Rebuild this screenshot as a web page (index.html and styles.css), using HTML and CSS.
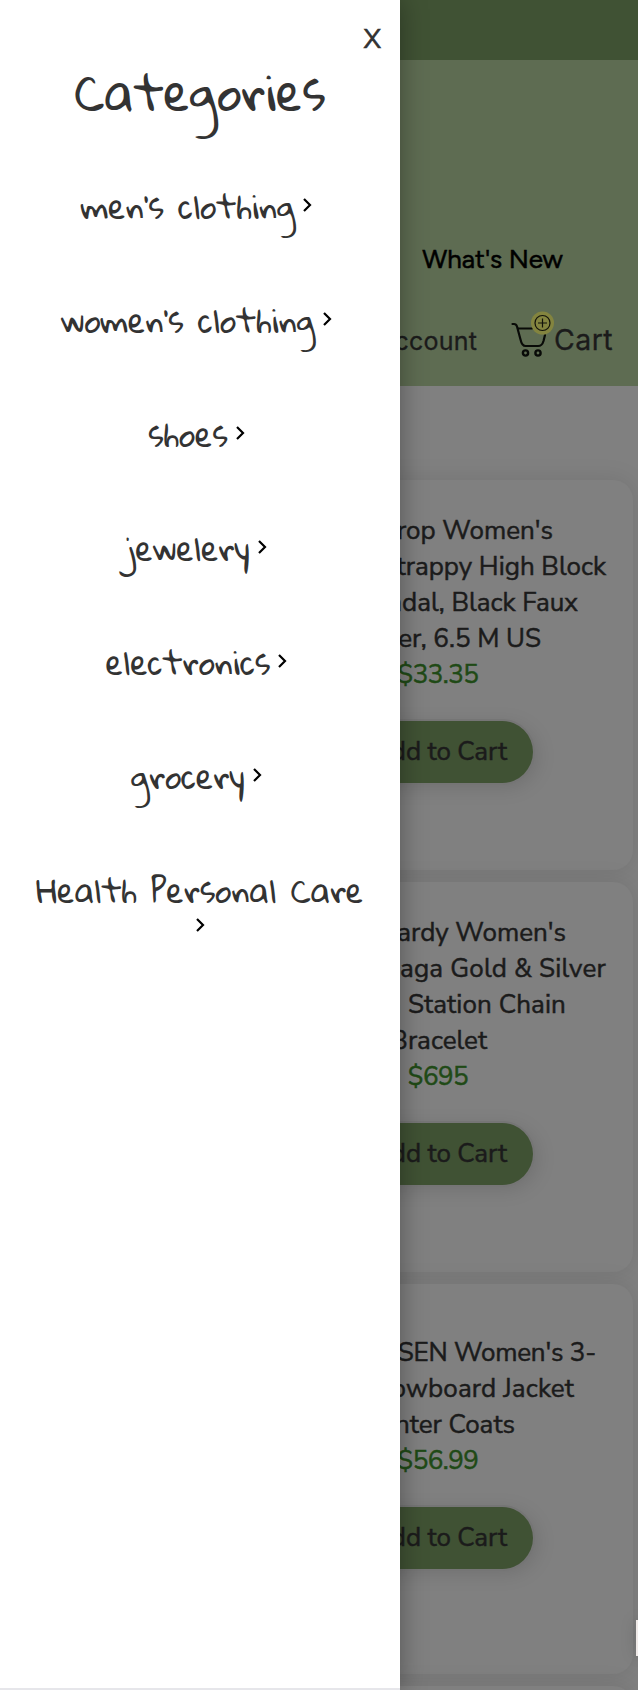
FILE: index.html
```
<!DOCTYPE html>
<html lang="en">
<head>
<meta charset="utf-8">
<title>Shop</title>
<link rel="stylesheet" href="styles.css">
</head>
<body>
<div class="page">
  <div class="topbar"></div>
  <header class="header">
    <nav class="links"><a class="whats-new">What's New</a></nav>
    <div class="tools">
      <span class="account">Account</span>
      <span class="cart">
        <svg class="cart-icon" width="43" height="50" viewBox="0 0 43 50" fill="none">
          <path d="M1.500 15H3C4.800 15 5.500 16 6 17.500L9.500 30.500C10.500 35 11.500 37 14.500 37H27C30.500 37 31.500 35.500 32.500 32L34 26M7.500 19.500H21" stroke="#080a07" stroke-width="2.200" stroke-linecap="round" stroke-linejoin="round"/>
          <circle cx="31.500" cy="14" r="11.500" fill="#83843f"/>
          <circle cx="14.500" cy="44" r="2.600" stroke="#080a07" stroke-width="2.400"/>
          <circle cx="27" cy="44" r="2.600" stroke="#080a07" stroke-width="2.400"/>
          <circle cx="31.500" cy="14" r="7.500" stroke="#12120a" stroke-width="1.200"/>
          <path d="M27 14H36M31.500 9.500V18.500" stroke="#12120a" stroke-width="1.200"/>
        </svg>
        <span class="cart-label">Cart</span>
      </span>
    </div>
  </header>
  <main class="products">
    <article class="card card-sandal">
      <h3 class="title"><span>The Drop Women's</span><span>Pascale Strappy High Block</span><span>Heel Sandal, Black Faux</span><span>Leather, 6.5 M US</span></h3>
      <p class="price">$33.35</p>
      <button class="add">Add to Cart</button>
    </article>
    <article class="card card-bracelet">
      <h3 class="title"><span>John Hardy Women's</span><span>Legends Naga Gold &amp; Silver</span><span>Dragon Station Chain</span><span>Bracelet</span></h3>
      <p class="price">$695</p>
      <button class="add">Add to Cart</button>
    </article>
    <article class="card card-jacket">
      <h3 class="title"><span>BIYLACLESEN Women's 3-</span><span>in-1 Snowboard Jacket</span><span>Winter Coats</span></h3>
      <p class="price">$56.99</p>
      <button class="add">Add to Cart</button>
    </article>
    <article class="card"></article>
  </main>
</div>
<div class="edge-tab"></div>
<aside class="drawer">
  <button class="close">X</button>
  <h2 class="heading">Categories</h2>
  <ul class="menu">
    <li><span>men's clothing</span><svg class="chev" viewBox="0 0 24 24"><path d="M9 6L15 12L9 18"/></svg></li>
    <li><span>women's clothing</span><svg class="chev" viewBox="0 0 24 24"><path d="M9 6L15 12L9 18"/></svg></li>
    <li><span>shoes</span><svg class="chev" viewBox="0 0 24 24"><path d="M9 6L15 12L9 18"/></svg></li>
    <li><span>jewelery</span><svg class="chev" viewBox="0 0 24 24"><path d="M9 6L15 12L9 18"/></svg></li>
    <li><span>electronics</span><svg class="chev" viewBox="0 0 24 24"><path d="M9 6L15 12L9 18"/></svg></li>
    <li><span>grocery</span><svg class="chev" viewBox="0 0 24 24"><path d="M9 6L15 12L9 18"/></svg></li>
    <li><span>Health Personal Care</span><svg class="chev" viewBox="0 0 24 24"><path d="M9 6L15 12L9 18"/></svg></li>
  </ul>
</aside>
</body>
</html>
```
FILE: styles.css
```
* { box-sizing: border-box; }
body {
  margin: 0;
  height: 1690px;
  overflow: hidden;
  position: relative;
  background: #808080;
  font-family: "Nunito Sans", Lato, sans-serif;
  font-size: 26px;
  line-height: 36px;
  color: #1b1b1b;
}
.page { height: 1690px; overflow: hidden; }
.topbar { height: 60px; background: #405234; }
.header {
  height: 326px;
  padding: 181px 25px 0 0;
  background: #5e6c52;
  display: flex;
  flex-direction: column;
}
.links { display: flex; justify-content: flex-end; padding-right: 50px; }
.whats-new { color: #000; font-family: Figtree, Lato, sans-serif; -webkit-text-stroke: .5px #000; }
.tools {
  margin-top: 28px;
  display: flex;
  justify-content: flex-end;
  align-items: flex-start;
  font-family: Inter, sans-serif;
}
.account { font-size: 25px; letter-spacing: .2px; margin: 18px 34px 0 0; -webkit-text-stroke: .3px; }
.cart { display: flex; }
.cart-icon { margin-top: 4px; }
.cart-label { font-size: 28.500px; letter-spacing: .4px; margin-top: 17px; -webkit-text-stroke: .3px; }
.products {
  padding: 94px 5px 0 243px;
  display: flex;
  flex-direction: column;
  gap: 12px;
}
.card {
  height: 390px;
  flex: none;
  border-radius: 20px;
  background: #808080;
  box-shadow: 0 0 25px rgba(0, 0, 0, .1);
  padding-bottom: 54px;
  display: flex;
  flex-direction: column;
  justify-content: center;
  align-items: center;
}
.title {
  margin: 0;
  width: 100%;
  font-size: 26px;
  font-weight: 400;
  text-align: right;
  -webkit-text-stroke: .5px;
}
.title span { display: block; white-space: nowrap; padding-right: 27px; }
.card-sandal span:nth-child(1) { padding-right: 80px; }
.card-sandal span:nth-child(3) { padding-right: 55px; }
.card-sandal span:nth-child(4) { padding-right: 92px; }
.card-bracelet span:nth-child(1) { padding-right: 67px; }
.card-bracelet span:nth-child(2) { letter-spacing: .2px; }
.card-bracelet span:nth-child(3) { padding-right: 67px; letter-spacing: .1px; }
.card-bracelet span:nth-child(4) { padding-right: 146px; }
.card-jacket span:nth-child(1) { padding-right: 37px; letter-spacing: -.2px; }
.card-jacket span:nth-child(2) { padding-right: 59px; letter-spacing: .15px; }
.card-jacket span:nth-child(3) { padding-right: 118px; }
.price { margin: 0; color: #1f4a16; letter-spacing: -.5px; -webkit-text-stroke: .5px; }
.add {
  margin: 28px 0 0;
  width: 190px;
  height: 62px;
  border: 0;
  border-radius: 31px;
  padding: 0 0 0 3px;
  background: #405234;
  color: #1b1b1b;
  font: inherit;
  letter-spacing: -.1px;
  -webkit-text-stroke: .5px;
  box-shadow: 0 0 0 2px #757575, 4px 4px 20px rgba(0, 0, 0, .13);
}
.edge-tab {
  position: absolute;
  right: 0;
  top: 1620px;
  width: 2px;
  height: 36px;
  background: #efeae8;
  box-shadow: 0 0 14px rgba(0, 0, 0, .4);
}
.drawer {
  position: absolute;
  left: 0;
  top: 0;
  width: 400px;
  height: 1690px;
  background: #fff;
  border-bottom: 2px solid #e6e6ea;
  box-shadow: 0 0 25px rgba(0, 0, 0, .35);
  color: #333;
  display: flex;
  flex-direction: column;
}
.close {
  align-self: flex-end;
  margin: 23px 19px 0 0;
  padding: 0;
  border: 0;
  background: none;
  color: #333;
  font: 27px/34px "Nunito Sans", "Open Sans", sans-serif;
  -webkit-text-stroke: .6px;
}
.heading {
  margin: 5px 0 0;
  text-align: center;
  font: 48px/60px "Gloria Hallelujah", "Comic Neue", cursive;
}
.menu {
  list-style: none;
  margin: 66px 0 0;
  padding: 0;
  font: 32px/36px "Gloria Hallelujah", "Comic Neue", cursive;
}
.menu li {
  height: 36px;
  margin-bottom: 78px;
  display: flex;
  flex-wrap: wrap;
  justify-content: center;
  padding: 0 25px;
}
.chev {
  width: 24px;
  height: 24px;
  margin: 5px 0 0;
  fill: none;
  stroke: #000;
  stroke-width: 2.200px;
}
```
